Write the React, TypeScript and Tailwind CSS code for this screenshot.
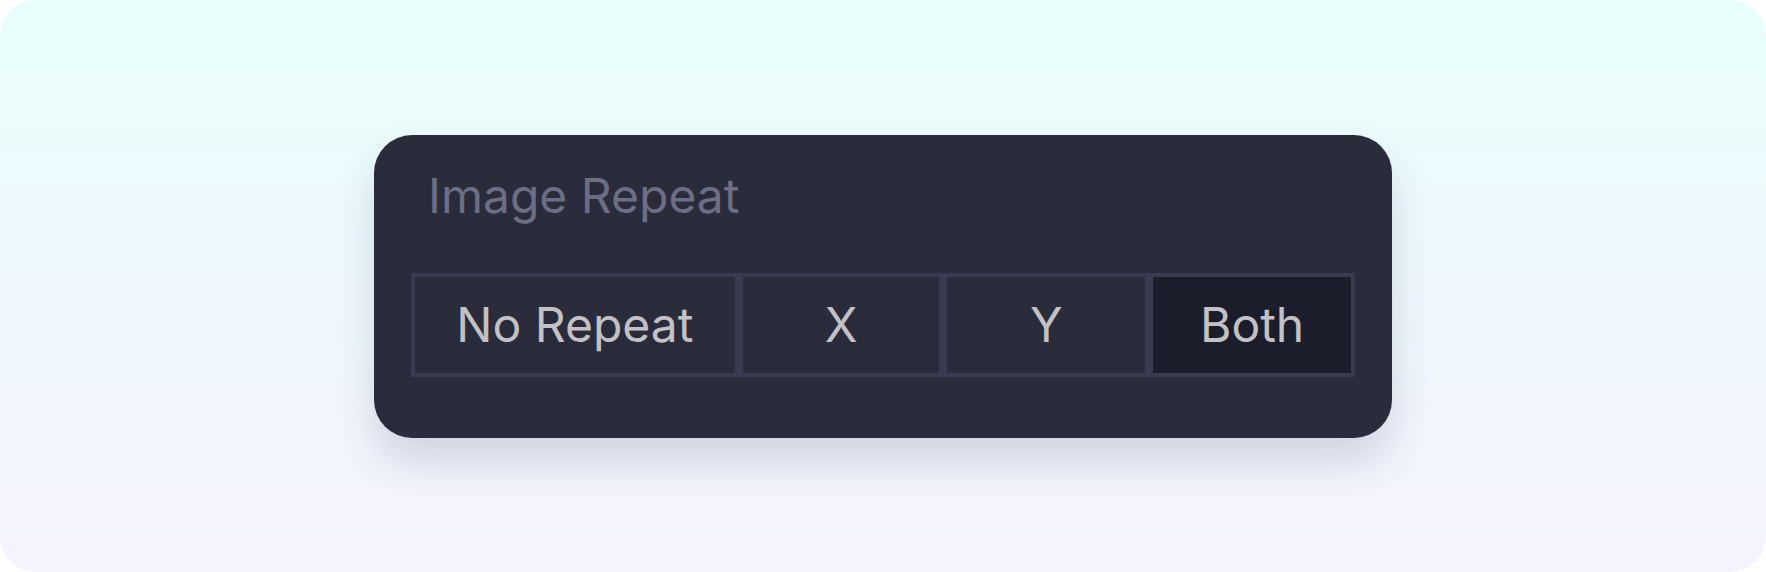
import React from 'react';

const options = [
  { label: 'No Repeat', width: 'w-[328px]', active: false },
  { label: 'X', width: 'w-[205px]', active: false },
  { label: 'Y', width: 'w-[206px]', active: false },
  { label: 'Both', width: 'w-[206px]', active: true },
];

const App: React.FC = () => {
  return (
    <div className="w-[1766px] h-[572px] bg-white">
      <div className="w-full h-full rounded-[36px] bg-gradient-to-b from-[#e8fefc] to-[#f5f3fe] flex items-center justify-center font-['Inter',sans-serif]">
        <div className="w-[1018px] rounded-[38px] bg-[#2a2b3b] px-[37px] pt-[32px] pb-[61px] shadow-[0_24px_40px_rgba(40,45,80,0.16)]">
          <div className="pl-[17px] text-[48px] leading-[58px] text-[#6c6e86]">
            Image Repeat
          </div>
          <div className="mt-[48px] flex">
            {options.map((o) => (
              <button
                key={o.label}
                className={`${o.width} h-[104px] border-4 border-[#3a3b51] flex items-center justify-center text-[48px] text-[#c2c2c6] ${
                  o.active ? 'bg-[#1c1d2a]' : 'bg-[#2a2b3b]'
                }`}
              >
                {o.label}
              </button>
            ))}
          </div>
        </div>
      </div>
    </div>
  );
};

export default App;
